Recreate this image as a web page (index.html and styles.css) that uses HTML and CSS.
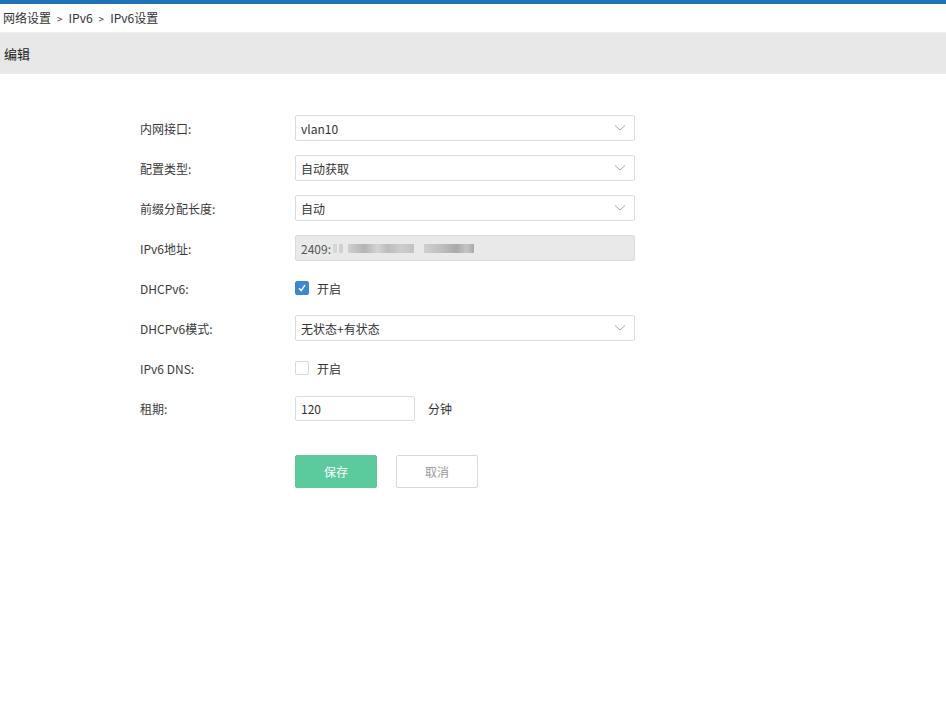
FILE: index.html
```html
<!DOCTYPE html>
<html lang="zh">
<head>
<meta charset="utf-8">
<link rel="stylesheet" href="styles.css">
</head>
<body>
<div class="topbar"></div>
<div class="crumbs">网络设置<span class="sep">&gt;</span>IPv6<span class="sep">&gt;</span>IPv6设置</div>
<div class="panel-head">编辑</div>
<form class="form">
  <div class="row">
    <label class="lbl">内网接口:</label>
    <div class="select"><span>vlan10</span><svg class="arrow" viewBox="0 0 12 8"><path d="M1 1.5 L6 6 L11 1.5" fill="none" stroke="#a8a8a8" stroke-width="1"/></svg></div>
  </div>
  <div class="row">
    <label class="lbl">配置类型:</label>
    <div class="select"><span>自动获取</span><svg class="arrow" viewBox="0 0 12 8"><path d="M1 1.5 L6 6 L11 1.5" fill="none" stroke="#a8a8a8" stroke-width="1"/></svg></div>
  </div>
  <div class="row">
    <label class="lbl">前缀分配长度:</label>
    <div class="select"><span>自动</span><svg class="arrow" viewBox="0 0 12 8"><path d="M1 1.5 L6 6 L11 1.5" fill="none" stroke="#a8a8a8" stroke-width="1"/></svg></div>
  </div>
  <div class="row">
    <label class="lbl">IPv6地址:</label>
    <div class="select disabled"><span>2409:</span><span class="blur"><i class="b1"></i><i class="b2"></i><i class="b3"></i><i class="b4"></i></span></div>
  </div>
  <div class="row">
    <label class="lbl">DHCPv6:</label>
    <div class="check"><span class="box on"><svg viewBox="0 0 14 14"><path d="M3.5 7.2 L6 10 L10.5 3.5" fill="none" stroke="#fff" stroke-width="1.6"/></svg></span><span>开启</span></div>
  </div>
  <div class="row">
    <label class="lbl">DHCPv6模式:</label>
    <div class="select"><span>无状态+有状态</span><svg class="arrow" viewBox="0 0 12 8"><path d="M1 1.5 L6 6 L11 1.5" fill="none" stroke="#a8a8a8" stroke-width="1"/></svg></div>
  </div>
  <div class="row">
    <label class="lbl">IPv6 DNS:</label>
    <div class="check"><span class="box"></span><span>开启</span></div>
  </div>
  <div class="row">
    <label class="lbl">租期:</label>
    <div class="text-input">120</div>
    <span class="unit">分钟</span>
  </div>
  <div class="actions">
    <button type="button" class="btn primary">保存</button>
    <button type="button" class="btn">取消</button>
  </div>
</form>
</body>
</html>
```
FILE: styles.css
```css
* { box-sizing: border-box; }
html, body { margin: 0; padding: 0; background: #fff; }
body {
  font-family: "Noto Sans CJK SC", "Noto Sans", sans-serif;
  font-size: 12px;
  color: #333;
  width: 946px;
  height: 719px;
  overflow: hidden;
}
.topbar { height: 4px; background: #1f72b5; }
.crumbs {
  height: 28px;
  line-height: 28px;
  padding-left: 3px;
  font-size: 12px;
  color: #333;
}
.crumbs .sep { margin: 0 6px; font-size: 10px; }
.panel-head {
  height: 42px;
  line-height: 42px;
  background: #e8e8e8;
  border-top: 1px solid #f0f0f0;
  padding-left: 4px;
  font-size: 13px;
  color: #222;
}
.form {
  padding: 41px 0 0 140px;
}
.row {
  display: flex;
  align-items: center;
  height: 26px;
  margin-bottom: 14px;
}
.lbl {
  width: 155px;
  flex: none;
  color: #3a3a3a;
}
.select {
  width: 340px;
  height: 26px;
  border: 1px solid #dcdcdc;
  border-radius: 2px;
  display: flex;
  align-items: center;
  padding: 0 8px 0 5px;
  color: #333;
  background: #fff;
}
.select span:first-child { flex: none; }
.select .arrow { width: 12px; height: 8px; margin-left: auto; }
.select.disabled { background: #e9e9e9; color: #555; }
.blur { display: flex; align-items: center; height: 12px; margin-left: 2px; gap: 5px; }
.blur i { display: block; height: 9px; background: #c8c8c8; }
.blur .b1 { width: 10px; background: linear-gradient(90deg, #d6d6d6 40%, #e9e9e9 40%, #e9e9e9 60%, #d0d0d0 60%); }
.blur .b2 { width: 66px; background: linear-gradient(90deg, #cfcfcf, #b4b4b4 25%, #d4d4d4 45%, #bcbcbc 60%, #cdcdcd 80%, #c2c2c2); }
.blur .b3 { width: 0; }
.blur .b4 { width: 50px; background: linear-gradient(90deg, #d0d0d0, #bbb 40%, #a9a9a9 65%, #c4c4c4 85%, #aaa); }
.check { display: flex; align-items: center; gap: 8px; }
.box {
  width: 14px; height: 14px;
  border: 1px solid #d8d8d8;
  border-radius: 2px;
  background: #fff;
  display: flex;
}
.box.on { background: #3b87d6; border-color: #3b87d6; }
.box svg { width: 12px; height: 12px; }
.text-input {
  width: 120px;
  height: 25px;
  border: 1px solid #dcdcdc;
  border-radius: 2px;
  padding-left: 5px;
  line-height: 23px;
  color: #333;
}
.unit { margin-left: 13px; }
.actions {
  display: flex;
  gap: 19px;
  padding-left: 155px;
  margin-top: 34px;
}
.btn {
  width: 82px;
  height: 33px;
  border: 1px solid #d9d9d9;
  border-radius: 2px;
  background: #fff;
  color: #999;
  font-family: inherit;
  font-size: 12px;
  padding: 0;
}
.btn.primary { background: #5bcb9e; border-color: #5bcb9e; color: #fff; }
```
